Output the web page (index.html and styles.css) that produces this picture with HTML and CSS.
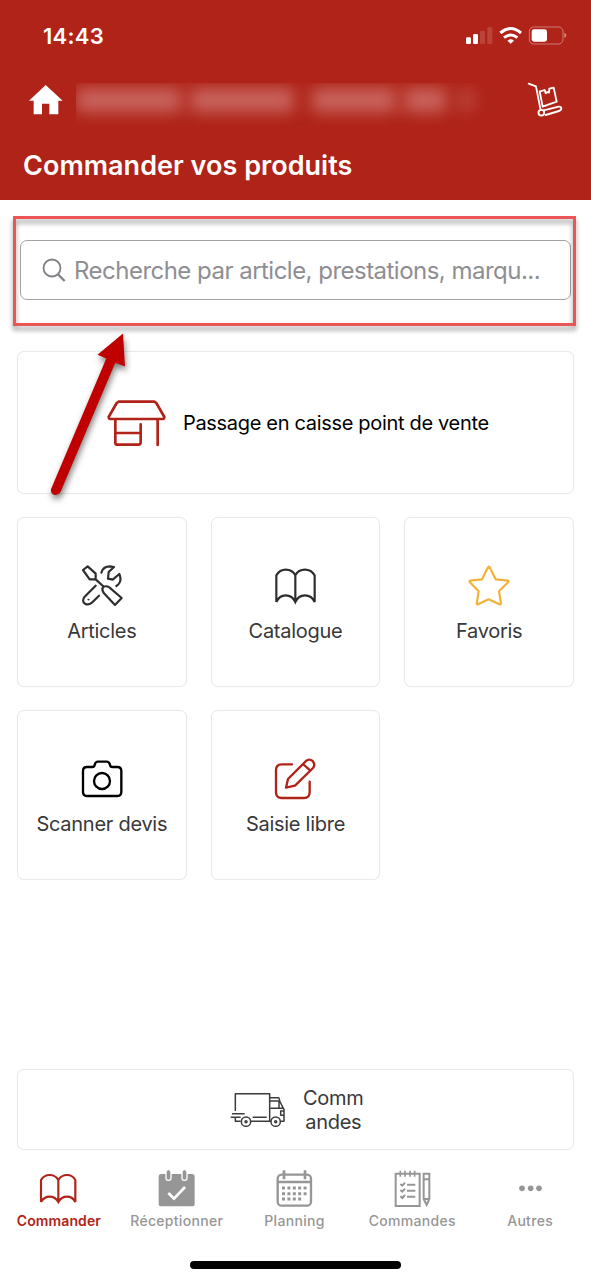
FILE: index.html
```html
<!DOCTYPE html>
<html lang="fr">
<head>
<meta charset="utf-8">
<meta name="viewport" content="width=device-width, initial-scale=1">
<title>Commander vos produits</title>
<link rel="stylesheet" href="styles.css">
</head>
<body>
<div class="app">
  <header class="header">
    <div class="status">
      <span class="time">14:43</span>
      <svg class="status-icons" width="104" height="20" viewBox="522 78 312 60">
        <g fill="#fff">
          <rect x="525" y="112" width="15" height="20" rx="4"/>
          <rect x="546" y="102" width="15" height="30" rx="4"/>
          <g fill-opacity=".15"><rect x="567" y="92" width="15" height="40" rx="4"/><rect x="589" y="81" width="15" height="51" rx="4"/></g>
          <path d="M649 122q10-8 20 0l-10 9z"/>
          <rect x="722" y="88" width="46" height="37" rx="7"/>
          <path fill-opacity=".45" d="M820 98q6 2 6 8t-6 8z"/>
        </g>
        <g fill="none" stroke="#fff" stroke-width="9">
          <path d="M628 99q31-27 62 0"/><path d="M639 113q20-16 40 0"/>
          <rect x="715" y="81" width="101" height="51" rx="13" stroke-width="3" stroke-opacity=".4"/>
        </g>
      </svg>
    </div>
    <div class="account">
      <svg class="home" width="34" height="32" viewBox="87 252 102 96"><path fill="#fff" d="M137 255l51 47h-13v41h-27v-32h-22v32h-25v-41H87z"/></svg>
      <div class="masked"><i class="w1"></i><i class="w2"></i><i class="w3"></i><i class="w4"></i><i class="w5"></i></div>
      <svg class="cart" width="36" height="36" viewBox="708 246 108 108" fill="none" stroke="#fff" stroke-width="5.500" stroke-linecap="round" stroke-linejoin="round">
        <path d="M713 251l22 8 13 67"/>
        <path d="M746 275l15-5 3 10 5-4 5 2 1-12 13-3 9 42-42 15-9-46"/>
        <circle cx="751" cy="338" r="8.500"/>
        <path d="M758 331l45-11q8-1 8 5 0 6-7 8l-40 12"/>
      </svg>
    </div>
    <h1 class="title">Commander vos produits</h1>
  </header>

  <main class="main">
    <div class="search">
      <svg width="24" height="24" viewBox="126 156 72 72" fill="none" stroke="#828287" stroke-width="5.500"><circle cx="156" cy="186" r="25.500"/><path stroke-width="7" d="M174 205l20 20"/></svg>
      <span class="placeholder">Recherche par article, prestations, marqu...</span>
    </div>

    <div class="card checkout">
      <svg width="60" height="50" viewBox="290 218 180 150" fill="none" stroke="#b02318" stroke-width="8" stroke-linecap="round" stroke-linejoin="round">
        <path d="M328 229h107l6 4 24 42q0 5-5 6H303q-5-1-5-6l24-42z"/>
        <path d="M318 283v69q0 6 7 6h62q7 0 7-7v-54M318 323h75M445 283v76"/>
      </svg>
      <span>Passage en caisse point de vente</span>
    </div>

    <div class="grid">
      <div class="card tile">
        <svg width="44" height="44" viewBox="60 42 132 132" fill="none" stroke="#2d2d2f" stroke-width="6.500" stroke-linecap="round" stroke-linejoin="round">
          <path d="M69 60l14-11 24 22v17H89zM107 88l22 20"/>
          <path d="M129 111q10-5 19 1l37 32-20 21-33-35q-8-10-3-19z"/>
          <path d="M124 68q5-19 26-19l12 2-16 15-2 20 14 3 20-17q10 24-9 36"/>
          <path d="M107 107l-33 33q-10 13 1 21 12 6 22-4l20-20"/>
          <circle cx="85" cy="149" r="1.500" stroke-width="3"/>
        </svg>
        <span>Articles</span>
      </div>
      <div class="card tile">
        <svg width="44" height="44" viewBox="640 42 132 132" fill="none" stroke="#2d2d2f" stroke-width="6.500">
          <path d="M650 156V76q10-17 28-17 20 0 29 17 9-17 29-17 19 0 29 17v80q-9-20-29-20-20 0-29 20-9-20-29-20-19 0-28 20M707 76v80"/>
        </svg>
        <span>Catalogue</span>
      </div>
      <div class="card tile">
        <svg width="44" height="44" viewBox="201 162 132 132" fill="none" stroke="#f2b237" stroke-width="6.500" stroke-linejoin="round">
          <path d="M264 172q3-4 5 0l18 36 37 4q3 1 1 4l-28 28 6 36q-1 5-5 3l-32-15-32 15q-4 1-4-3l6-36-27-28q-2-3 2-4l35-4z"/>
        </svg>
        <span>Favoris</span>
      </div>
      <div class="card tile">
        <svg width="44" height="44" viewBox="210 171 132 132" fill="none" stroke="#000" stroke-width="7" stroke-linejoin="round">
          <path d="M231 201h16q6 0 7-6 2-10 10-10h26q8 0 10 10 1 6 7 6h15q12 0 12 12v63q0 12-12 12h-91q-12 0-12-12v-63q0-12 12-12z"/>
          <circle cx="276" cy="243" r="24"/>
        </svg>
        <span>Scanner devis</span>
      </div>
      <div class="card tile">
        <svg width="44" height="44" viewBox="790 171 132 132" fill="none" stroke="#b02318" stroke-width="7" stroke-linecap="round" stroke-linejoin="round">
          <path d="M847 193h-31q-17 0-17 17v67q0 17 17 17h67q17 0 17-17v-32"/>
          <path d="M829 263l6-26 54-54q10-8 20 0 9 11 1 21l-54 53zM880 192l22 20"/>
        </svg>
        <span>Saisie libre</span>
      </div>
    </div>

    <div class="card orders">
      <svg width="56" height="38" viewBox="60 90 168 114" fill="none" stroke="#3c3c3e" stroke-width="4.500" stroke-linejoin="round">
        <path d="M76 150V98h103v83h-56M76 168v13h16M66 158h38M62 169h30M128 169h42"/>
        <path d="M179 110h26q3 0 4 10l13 26v35h-10M179 120h29M181 142h38M207 120v20M222 150h-10v13h10M179 181h4"/>
        <circle cx="108" cy="182" r="14"/><circle cx="197" cy="182" r="14"/>
        <circle cx="108" cy="182" r="3"/><circle cx="197" cy="182" r="3"/>
      </svg>
      <span>Comm<br>andes</span>
    </div>
  </main>

  <nav class="tabs">
    <div class="tab active">
      <svg width="39" height="39" viewBox="120 42 117 117" fill="none" stroke="#b02318" stroke-width="6.500">
        <path d="M126 141V75q9-15 26-15t26 15q9-15 26-15t25 15v66q-8-16-25-16t-26 16q-9-16-26-16t-26 16M178 75v66"/>
      </svg>
      <span>Commander</span>
    </div>
    <div class="tab">
      <svg width="39" height="39" viewBox="475 42 117 117">
        <rect x="480" y="57" width="108" height="97" rx="8" fill="#969696"/>
        <g fill="#969696" stroke="#fff" stroke-width="4"><rect x="502" y="44" width="15" height="32" rx="7"/><rect x="550" y="44" width="15" height="32" rx="7"/></g>
        <path d="M509 114l17 17 33-35" fill="none" stroke="#fff" stroke-width="8"/>
      </svg>
      <span>Réceptionner</span>
    </div>
    <div class="tab">
      <svg width="39" height="39" viewBox="826 42 117 117" fill="none" stroke="#969696" stroke-width="7">
        <rect x="834" y="59" width="100" height="93" rx="12"/>
        <path d="M834 81h100"/><path stroke-width="8" d="M853 46v27M916 46v27"/>
        <path stroke-width="9" stroke-dasharray="9 7.200" d="M847 99h75M847 116h75M847 132h57.500"/>
      </svg>
      <span>Planning</span>
    </div>
    <div class="tab">
      <svg width="39" height="39" viewBox="306 42 117 117" fill="none" stroke="#969696" stroke-width="6">
        <path d="M314 56h72v97h-72zM398 56h17v76l-8 18-9-18zM398 73h17M398 132h17"/>
        <path stroke-width="5" d="M328 47v18M342 47v18M357 47v18M371 47v18"/>
        <path d="M328 87l6 5 8-9M328 105l6 5 8-9M328 124l6 5 8-9M348 89h25M348 107h25M348 125h25"/>
      </svg>
      <span>Commandes</span>
    </div>
    <div class="tab">
      <svg width="39" height="39" viewBox="661 42 117 117" fill="#969696"><circle cx="694" cy="100" r="8.500"/><circle cx="720" cy="100" r="8.500"/><circle cx="745" cy="100" r="8.500"/></svg>
      <span>Autres</span>
    </div>
  </nav>
  <div class="home-indicator"></div>

  <div class="highlight"></div>
  <svg class="arrow" width="100" height="190" viewBox="40 320 100 190">
    <path fill="#c00000" d="M123 333.500L125 366.500L115.300 362.800L60.500 492Q57.500 496.500 53.500 494.500Q49.500 492 51.500 488L106.300 358.500L97.500 354.800Z"/>
  </svg>
</div>
</body>
</html>
```
FILE: styles.css
```css
* { box-sizing: border-box; }
body { margin: 0; background: #fff; font-family: Inter, "Liberation Sans", sans-serif; color: #38383a; }
svg { display: block; flex: none; }
.app { position: relative; width: 591px; height: 1280px; display: flex; flex-direction: column; overflow: hidden; }

.header { height: 200px; background: #af2318; color: #fff; flex: none; display: flex; flex-direction: column; }
.status { display: flex; justify-content: space-between; align-items: center; height: 46px; padding: 26px 22px 0 43px; }
.time { font-size: 22px; line-height: 20px; font-weight: 600; letter-spacing: .3px; }
.account { display: flex; align-items: flex-start; height: 43px; margin-top: 37px; padding: 0 28px 0 29px; }
.home { margin-top: 1px; }
.masked { display: flex; width: 412px; height: 43px; margin-left: 13px; padding-top: 5px; overflow: hidden; }
.masked i { height: 24px; background: #c9655e; filter: blur(8px); flex: none; }
.w1 { width: 105px; }
.w2 { width: 104px; margin-left: 9px; }
.w3 { width: 84px; margin-left: 18px; }
.w4 { width: 42px; margin-left: 8px; }
.masked .w5 { width: 16px; margin-left: 12px; opacity: .5; }
.cart { margin: -1px 0 0 auto; }
.title { margin: 22px 0 0 23px; font-size: 27px; line-height: 36px; font-weight: 600; letter-spacing: .03px; white-space: nowrap; }

.main { flex: 1; display: flex; flex-direction: column; padding: 40px 17px 0; }
.search { display: flex; align-items: center; gap: 8px; height: 60px; margin: 0 3px 51px; padding-left: 21px; border: 1.5px solid #a2a2a6; border-radius: 7px; color: #8e8e93; }
.placeholder { font-size: 24px; letter-spacing: -.52px; white-space: nowrap; }
.card { border: 1.5px solid #e9e9e9; border-radius: 7px; background: #fff; font-size: 20px; letter-spacing: -.27px; box-shadow: 0 0 1px #eee; }
.checkout { height: 143px; display: flex; align-items: center; gap: 17px; padding-left: 88px; margin-bottom: 23px; color: #000; letter-spacing: -.32px; white-space: nowrap; }
.grid { display: grid; grid-template-columns: repeat(3, 1fr); gap: 23px 24px; }
.tile { height: 170px; padding-top: 46px; display: flex; flex-direction: column; align-items: center; gap: 11px; line-height: 24px; white-space: nowrap; }
.orders { display: flex; align-items: center; gap: 17px; height: 81px; margin-top: 189px; padding-left: 212px; line-height: 24px; text-align: center; }

.tabs { height: 92px; display: grid; grid-template-columns: repeat(5, 1fr); flex: none; margin-right: 2px; }
.tab { display: flex; flex-direction: column; align-items: center; gap: 4px; font-size: 14px; line-height: 18px; font-weight: 500; color: #969696; letter-spacing: .3px; }
.active { color: #b02318; font-weight: 600; letter-spacing: .1px; }
.home-indicator { width: 211px; height: 8px; border-radius: 4px; background: #000; margin: 0 auto 11px; flex: none; }

/* annotation drawn over the screen */
.highlight { position: absolute; left: 13px; top: 216px; width: 563px; height: 110px; border: 3px solid #ea5555; filter: drop-shadow(0 4px 2.5px rgba(0,0,0,.4)); }
.arrow { position: absolute; left: 40px; top: 320px; filter: drop-shadow(1px 4px 3px rgba(0,0,0,.5)); }
```
